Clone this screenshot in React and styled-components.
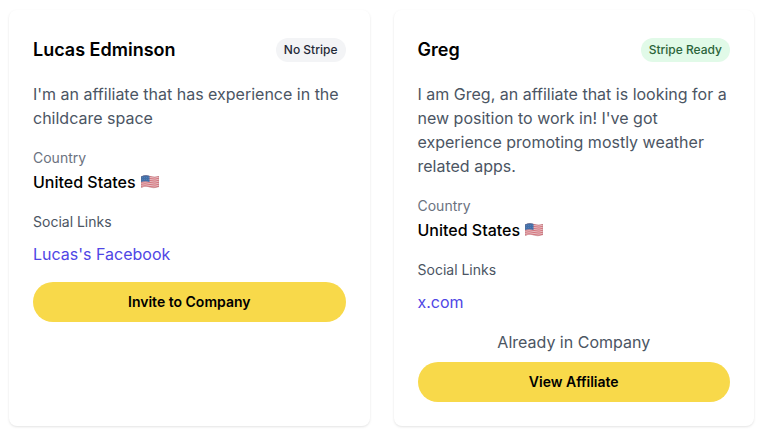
import React, { useId } from "react";
import styled, { createGlobalStyle } from "styled-components";

const GlobalStyle = createGlobalStyle`
  *, *::before, *::after { box-sizing: border-box; }
  body {
    margin: 0;
    background: #ffffff;
    color: #000000;
    font-family: Inter, sans-serif;
    font-size: 16px;
    line-height: 24px;
  }
  h2, p, dl, dt, dd, h3 { margin: 0; padding: 0; }
`;

const Grid = styled.main`
  display: grid;
  grid-template-columns: repeat(auto-fit, minmax(300px, 1fr));
  gap: 24px;
  padding: 10px 16px 8px 9px;
`;

const Card = styled.article`
  padding: 24px;
  border-radius: 8px;
  background: #ffffff;
  box-shadow: 0 1px 3px rgba(0, 0, 0, 0.08), 0 1px 2px rgba(0, 0, 0, 0.04);
`;

const CardHeader = styled.header`
  display: flex;
  align-items: center;
  justify-content: space-between;
  margin-bottom: 16px;
  padding: 2px 0;
`;

const Name = styled.h2`
  font-size: 18px;
  line-height: 28px;
  font-weight: 600;
`;

const Badge = styled.span`
  padding: 4px 8px;
  border-radius: 12px;
  font-size: 12px;
  line-height: 16px;
  font-weight: 500;
  color: ${(p) => (p.$ready ? "#2b643a" : "#1f2937")};
  background: ${(p) => (p.$ready ? "#e1fae8" : "#f3f4f6")};
`;

const Bio = styled.p`
  margin-bottom: 16px;
  color: #4b5563;
`;

const Fact = styled.dl`
  margin-bottom: 16px;
`;

const Label = styled.dt`
  font-size: 14px;
  line-height: 24px;
  color: #6b7280;
`;

const Value = styled.dd`
  display: flex;
  align-items: center;
  gap: 4px;
  font-weight: 500;
`;

const LinksTitle = styled.h3`
  margin-bottom: 8px;
  font-size: 14px;
  line-height: 24px;
  font-weight: 400;
  color: #4b5563;
`;

const SocialLink = styled.a`
  display: block;
  width: fit-content;
  margin-bottom: 16px;
  color: #4f46e5;
  text-decoration: none;
`;

const Note = styled.p`
  margin-bottom: 8px;
  text-align: center;
  color: #4b5563;
`;

const Button = styled.button`
  display: block;
  width: 100%;
  height: 40px;
  border: 0;
  border-radius: 20px;
  background: #f8d94a;
  color: #000000;
  font: 600 14px/20px Inter, sans-serif;
  cursor: pointer;
`;

function Flag() {
  const id = useId();
  return (
    <svg width="20" height="14" viewBox="0 0 40 28" role="img" aria-label="United States flag">
      <defs>
        <clipPath id={id}>
          <path d="M2 3Q11 -1 20 2T38 2V24Q29 28 20 25T2 26Z" />
        </clipPath>
      </defs>
      <g clipPath={`url(#${id})`}>
        <rect width="40" height="28" fill="#e6bfc3" />
        <g stroke="#d4737c" strokeWidth="2" fill="none">
          {[3, 7, 11, 15, 19, 23, 27].map((y) => (
            <path key={y} d={`M0 ${y}Q10 ${y - 3} 20 ${y}T40 ${y - 1}`} />
          ))}
        </g>
        <path d="M0 0H19V14Q9 11 0 15Z" fill="#426fa9" />
        <g fill="#88a7ce">
          {[5, 9, 13, 17].map((x) => (
            <React.Fragment key={x}>
              <circle cx={x} cy="5" r="0.7" />
              <circle cx={x} cy="9" r="0.7" />
            </React.Fragment>
          ))}
        </g>
        <path d="M2 3Q11 -1 20 2T38 2V24Q29 28 20 25T2 26Z" fill="none" stroke="#8b7475" strokeOpacity="0.5" />
      </g>
    </svg>
  );
}

const affiliates = [
  {
    name: "Lucas Edminson",
    ready: false,
    bio: "I'm an affiliate that has experience in the childcare space",
    link: { label: "Lucas's Facebook", href: "#facebook" },
    action: "Invite to Company",
  },
  {
    name: "Greg",
    ready: true,
    bio: "I am Greg, an affiliate that is looking for a new position to work in! I've got experience promoting mostly weather related apps.",
    link: { label: "x.com", href: "#x" },
    note: "Already in Company",
    action: "View Affiliate",
  },
];

function AffiliateCard({ name, ready, bio, link, note, action }) {
  return (
    <Card>
      <CardHeader>
        <Name>{name}</Name>
        <Badge $ready={ready}>{ready ? "Stripe Ready" : "No Stripe"}</Badge>
      </CardHeader>
      <Bio>{bio}</Bio>
      <Fact>
        <Label>Country</Label>
        <Value>
          United States <Flag />
        </Value>
      </Fact>
      <LinksTitle>Social Links</LinksTitle>
      <SocialLink href={link.href}>{link.label}</SocialLink>
      {note && <Note>{note}</Note>}
      <Button type="button">{action}</Button>
    </Card>
  );
}

export default function App() {
  return (
    <>
      <GlobalStyle />
      <Grid>
        {affiliates.map((a) => (
          <AffiliateCard key={a.name} {...a} />
        ))}
      </Grid>
    </>
  );
}
